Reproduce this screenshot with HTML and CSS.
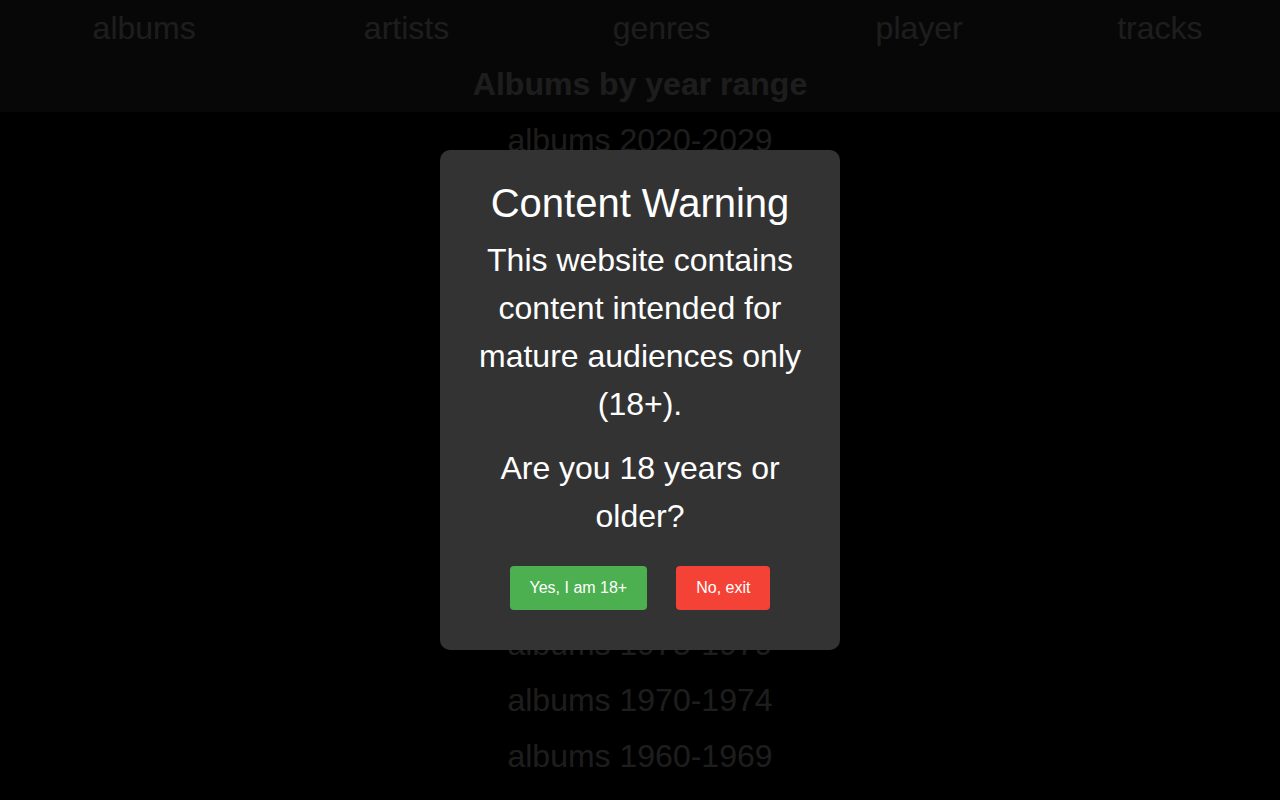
FILE: index.html
```html
<!DOCTYPE html>
<html lang="en">
<head>
<meta charset="utf-8">
<title>Albums by year range</title>
<link rel="stylesheet" href="styles.css">
</head>
<body>
<header class="top">
  <nav class="nav">
    <a class="nav-link" href="#">albums</a>
    <a class="nav-link" href="#">artists</a>
    <a class="nav-link" href="#">genres</a>
    <a class="nav-link" href="#">player</a>
    <a class="nav-link" href="#">tracks</a>
  </nav>
  <h1 class="title">Albums by year range</h1>
</header>
<ul class="ranges">
  <li><a href="#">albums 2020-2029</a></li>
  <li><a href="#">albums 2015-2019</a></li>
  <li><a href="#">albums 2010-2014</a></li>
  <li><a href="#">albums 2005-2009</a></li>
  <li><a href="#">albums 2000-2004</a></li>
  <li><a href="#">albums 1995-1999</a></li>
  <li><a href="#">albums 1990-1994</a></li>
  <li><a href="#">albums 1980-1989</a></li>
  <li><a href="#">albums 1975-1979</a></li>
  <li><a href="#">albums 1975-1979</a></li>
  <li><a href="#">albums 1970-1974</a></li>
  <li><a href="#">albums 1960-1969</a></li>
  <li><a href="#">albums 1950-1959</a></li>
</ul>
<div class="overlay">
  <div class="modal">
    <h2 class="modal-title">Content Warning</h2>
    <p class="modal-text">This website contains content intended for mature audiences only (18+).</p>
    <p class="modal-text">Are you 18 years or older?</p>
    <div class="actions">
      <button class="btn btn-yes" type="button">Yes, I am 18+</button>
      <button class="btn btn-no" type="button">No, exit</button>
    </div>
  </div>
</div>
</body>
</html>
```
FILE: styles.css
```css
html, body {
  margin: 0;
  padding: 0;
  background: #000;
  font-family: "Liberation Sans", Arial, sans-serif;
  color: #c4c4c4;
}

a {
  color: #c4c4c4;
  text-decoration: none;
}

.top {
  background: #333;
}

.nav {
  display: table;
  width: 100%;
  border-spacing: 2px 0;
  height: 56px;
  font-size: 32px;
}

.nav-link {
  display: table-cell;
  vertical-align: middle;
  text-align: center;
  padding: 0 1px;
}

.title {
  margin: 0;
  font-size: 32px;
  font-weight: bold;
  line-height: 56px;
  text-align: center;
}

.ranges {
  list-style: none;
  margin: 0;
  padding: 0;
  text-align: center;
  font-size: 32px;
  line-height: 56px;
}

.overlay {
  position: fixed;
  inset: 0;
  background: rgba(0, 0, 0, 0.85);
  display: flex;
  align-items: center;
  justify-content: center;
}

.modal {
  width: 400px;
  box-sizing: border-box;
  padding: 30px;
  background: #333;
  border-radius: 10px;
  text-align: center;
  color: #fff;
}

.modal-title {
  margin: 0 0 10px;
  font-size: 40px;
  font-weight: normal;
  line-height: 46px;
}

.modal-text {
  margin: 0 0 16px;
  font-size: 32px;
  line-height: 48px;
}

.actions {
  display: flex;
  justify-content: center;
  gap: 29px;
  padding: 10px 0;
}

.btn {
  border: none;
  border-radius: 4px;
  padding: 12px 20px;
  font-family: "Liberation Sans", Arial, sans-serif;
  font-size: 16px;
  line-height: 20px;
  color: #fff;
  cursor: pointer;
}

.btn-yes {
  background: #4caf50;
}

.btn-no {
  background: #f44336;
}
```
